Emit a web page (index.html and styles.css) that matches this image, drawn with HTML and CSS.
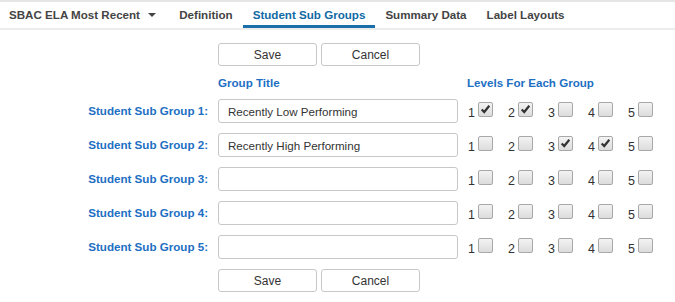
FILE: index.html
```html
<!DOCTYPE html>
<html lang="en">
<head>
	<meta charset="UTF-8">
	<title>Student Sub Groups</title>
	<link rel="stylesheet" href="styles.css">
</head>
<body>
	<div class="tabs">
		<div class="tab dropdown">SBAC ELA Most Recent <span class="caret"></span></div>
		<div class="tab">Definition</div>
		<div class="tab active">Student Sub Groups</div>
		<div class="tab">Summary Data</div>
		<div class="tab">Label Layouts</div>
	</div>

	<div class="groups">
		<div class="buttons">
			<button type="button">Save</button>
			<button type="button">Cancel</button>
		</div>

		<div class="head title">Group Title</div>
		<div class="head levels-head">Levels For Each Group</div>

		<label class="name">Student Sub Group 1:</label>
		<input type="text" value="Recently Low Performing">
		<div class="levels">
			<span class="level">1<input type="checkbox" checked></span>
			<span class="level">2<input type="checkbox" checked></span>
			<span class="level">3<input type="checkbox"></span>
			<span class="level">4<input type="checkbox"></span>
			<span class="level">5<input type="checkbox"></span>
		</div>

		<label class="name">Student Sub Group 2:</label>
		<input type="text" value="Recently High Performing">
		<div class="levels">
			<span class="level">1<input type="checkbox"></span>
			<span class="level">2<input type="checkbox"></span>
			<span class="level">3<input type="checkbox" checked></span>
			<span class="level">4<input type="checkbox" checked></span>
			<span class="level">5<input type="checkbox"></span>
		</div>

		<label class="name">Student Sub Group 3:</label>
		<input type="text">
		<div class="levels">
			<span class="level">1<input type="checkbox"></span>
			<span class="level">2<input type="checkbox"></span>
			<span class="level">3<input type="checkbox"></span>
			<span class="level">4<input type="checkbox"></span>
			<span class="level">5<input type="checkbox"></span>
		</div>

		<label class="name">Student Sub Group 4:</label>
		<input type="text">
		<div class="levels">
			<span class="level">1<input type="checkbox"></span>
			<span class="level">2<input type="checkbox"></span>
			<span class="level">3<input type="checkbox"></span>
			<span class="level">4<input type="checkbox"></span>
			<span class="level">5<input type="checkbox"></span>
		</div>

		<label class="name">Student Sub Group 5:</label>
		<input type="text">
		<div class="levels">
			<span class="level">1<input type="checkbox"></span>
			<span class="level">2<input type="checkbox"></span>
			<span class="level">3<input type="checkbox"></span>
			<span class="level">4<input type="checkbox"></span>
			<span class="level">5<input type="checkbox"></span>
		</div>

		<div class="buttons">
			<button type="button">Save</button>
			<button type="button">Cancel</button>
		</div>
	</div>
</body>
</html>
```

FILE: styles.css
```css
body {
	margin: 0;
	font-family: "Liberation Sans", Arial, sans-serif;
	font-size: 11.6px;
	color: #333;
	background: #fff;
	border-top: 2px solid #e6e6e6;
}
.tabs {
	display: flex;
	height: 26px;
	border-bottom: 2px solid #ececec;
}
.tab {
	padding: 0 10px;
	line-height: 26px;
	font-weight: bold;
	color: #444;
	box-sizing: border-box;
}
.tab.dropdown {
	padding-left: 9px;
	margin-right: 3px;
}
.tab .caret {
	display: inline-block;
	width: 0;
	height: 0;
	margin-left: 5px;
	vertical-align: 2px;
	border-left: 4px solid transparent;
	border-right: 4px solid transparent;
	border-top: 4px solid #444;
}
.tab.active {
	color: #106aa5;
	border-bottom: 3px solid #1a6fa8;
}
.groups {
	display: grid;
	grid-template-columns: 208px 240px auto;
	column-gap: 10px;
	row-gap: 10px;
	padding-top: 13px;
	align-items: start;
}
.groups .buttons {
	grid-column: 2 / 4;
	display: flex;
	gap: 4px;
}
.groups button {
	width: 99px;
	height: 23px;
	background: #fff;
	border: 1px solid #c8c8c8;
	border-radius: 3px;
	font-family: inherit;
	font-size: 12px;
	color: #333;
}
.groups .head {
	font-weight: bold;
	color: #1d6fc3;
	line-height: 16px;
	margin: -1px 0 -2px;
}
.groups .title {
	grid-column: 2;
}
.groups .levels-head {
	grid-column: 3;
	margin-left: -1px;
}
.groups .name {
	text-align: right;
	font-weight: bold;
	color: #1d6fc3;
	line-height: 24px;
}
.groups input[type="text"] {
	height: 24px;
	box-sizing: border-box;
	margin: 0;
	padding: 0 9px;
	border: 1px solid #c8c8c8;
	border-radius: 3px;
	font-family: inherit;
	font-size: 11.6px;
	color: #333;
}
.groups .levels {
	display: flex;
}
.levels .level {
	display: flex;
	align-items: flex-start;
	width: 40px;
	padding-top: 6px;
	line-height: 16px;
	font-size: 12.5px;
	color: #333;
}
.levels input[type="checkbox"] {
	appearance: none;
	-webkit-appearance: none;
	width: 15px;
	height: 15px;
	margin: -3px 0 0 3px;
	box-sizing: border-box;
	border: 1px solid #a8a8a8;
	border-radius: 2px;
	background: linear-gradient(#f3f3f3, #dcdcdc);
}
.levels input[type="checkbox"]:checked {
	background: url("data:image/svg+xml;utf8,<svg xmlns='http://www.w3.org/2000/svg' viewBox='0 0 13 13'><path d='M2 6.5 L5 9.5 L11 2' fill='none' stroke='%23333' stroke-width='2.6'/></svg>") center / 11px 11px no-repeat, linear-gradient(#f3f3f3, #dcdcdc);
}
```
